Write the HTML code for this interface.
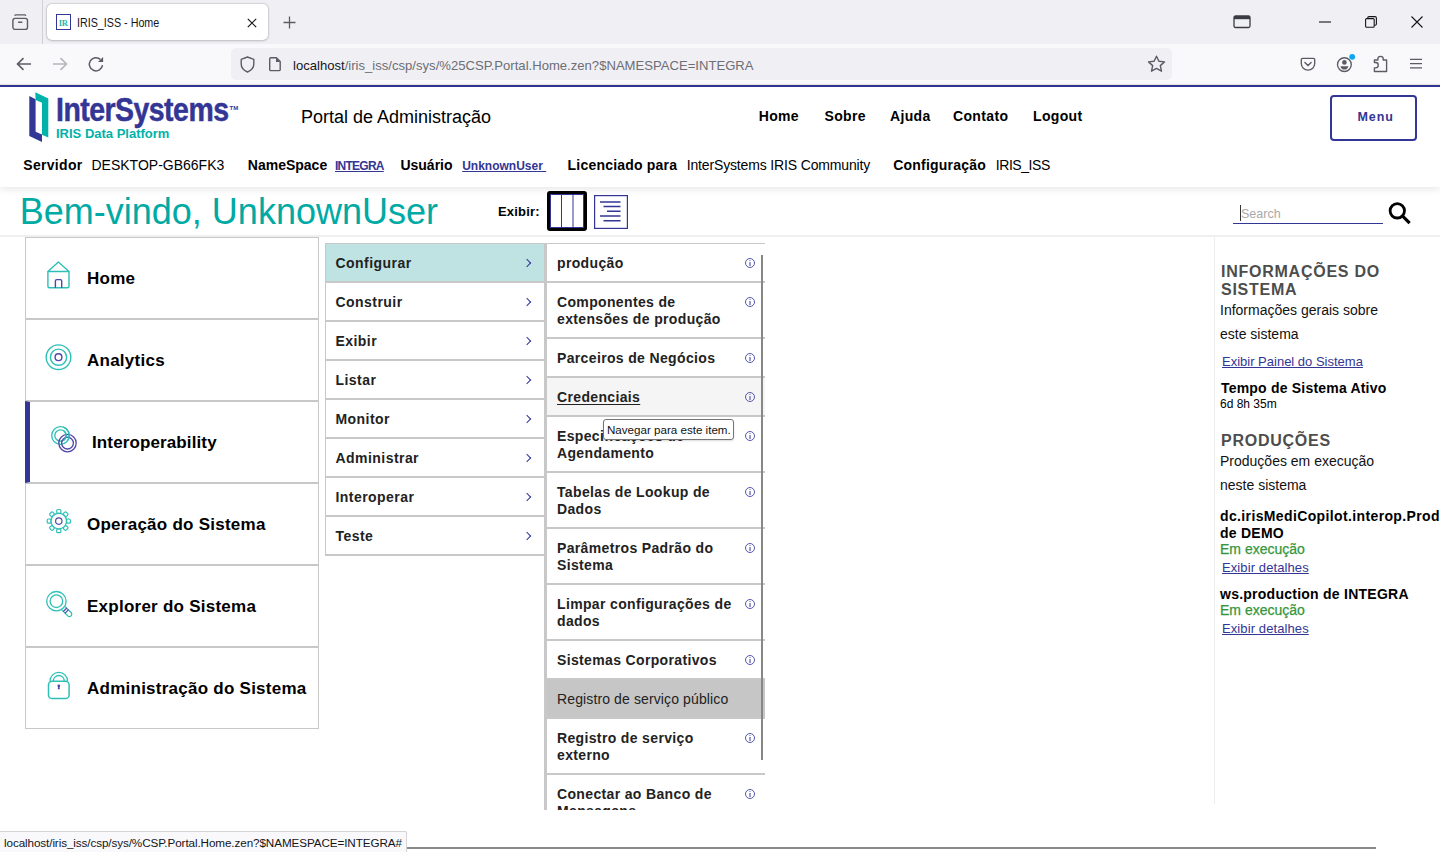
<!DOCTYPE html>
<html><head><meta charset="utf-8">
<style>
*{box-sizing:border-box;margin:0;padding:0}
html,body{width:1440px;height:852px;overflow:hidden;background:#fff;font-family:"Liberation Sans",sans-serif;color:#000}
.a{position:absolute}
.t{position:absolute;line-height:1;white-space:nowrap}
.b{font-weight:700}
svg{position:absolute;overflow:visible}
/* chrome */
#tabbar{left:0;top:0;width:1440px;height:44px;background:#f0f0f4}
#tabsep{left:42px;top:0;width:1px;height:44px;background:#cfcfd8}
#tab{left:47px;top:4px;width:221px;height:36px;background:#fff;border-radius:5px;box-shadow:0 0 2px rgba(0,0,0,.35),0 1px 3px rgba(0,0,0,.12)}
#navbar{left:0;top:44px;width:1440px;height:41px;background:#f9f9fb}
#url{left:231px;top:48px;width:941px;height:32px;background:#f0f0f4;border-radius:5px}
#blueline{left:0;top:85px;width:1440px;height:2px;background:#333695}
.ct{color:#15141a}
/* header */
#header{left:0;top:87px;width:1440px;height:100px;background:#fff;box-shadow:0 2px 8px rgba(0,0,0,.10);z-index:2}
.nav{font-size:14px;font-weight:700;letter-spacing:0.35px}
.lab{font-size:14px;font-weight:700}
.val{font-size:14px}
.lnk{font-size:12px;font-weight:700;color:#333695;text-decoration:underline}
#menubtn{left:1330px;top:95px;width:87px;height:46px;border:2px solid #333695;border-radius:4px;z-index:3}

.card{position:relative;height:82px;border:1px solid #c8c8c8;background:#fff}
.card .ct2{position:absolute;top:31.9px;font-size:17px;font-weight:700;letter-spacing:0.25px;line-height:1;white-space:nowrap}
.card.sel{border-left:5px solid #333695}
.card.sel .ct2{left:62px !important}
#menu{border:1px solid #c8c8c8;border-bottom:none;border-right:none}
.mi{position:relative;height:39px;padding:11px 0 0 9.5px;font-size:14px;font-weight:700;color:#222;line-height:17px;letter-spacing:0.45px;border-bottom:2px solid #c8c8c8;border-right:3px solid #c8c8c8}
.mi.on{background:#bfe3e3}
.chev{position:absolute;left:198px;top:16px;width:6px;height:6px;border-right:1.3px solid #333695;border-top:1.3px solid #333695;transform:rotate(45deg)}
#sub{border-top:1px solid #c8c8c8}
.si{position:relative;padding:11px 30px 9px 10px;font-size:14px;font-weight:700;color:#222;line-height:17px;letter-spacing:0.35px;border-bottom:2px solid #c8c8c8;border-left:3px solid #c8c8c8;white-space:nowrap}
.si.hov{background:#f5f5f5}
.si u{text-decoration:underline;text-underline-offset:2px}
.si.gray{background:#c6c6c6;font-weight:400;letter-spacing:0.12px;color:#222}
.inf{position:absolute;left:198px;top:14px;width:10px;height:10px;border:1.2px solid #5557aa;border-radius:50%}
.inf:after{content:"";position:absolute;left:2.85px;top:3.1px;width:1.8px;height:3.7px;background:#9a9cd0}.inf:before{content:"";position:absolute;left:2.85px;top:1.3px;width:1.8px;height:1px;background:#b4b6dc}
.rh{font-size:16px;color:#4d4d4d;letter-spacing:0.75px}
.rp{font-size:14px;color:#111}
.rl{font-size:13px;color:#333695;text-decoration:underline}
.grn{font-size:14px;color:#35963a;-webkit-text-stroke:0.25px #35963a}
</style></head><body>
<!-- ===== browser chrome ===== -->
<div id="tabbar" class="a"></div>
<div id="tabsep" class="a"></div>
<!-- tab overview icon -->
<svg style="left:12px;top:13px" width="18" height="18" viewBox="0 0 18 18">
  <path d="M3 2.3 Q3 1.9 4 1.9 H12.6 Q13.6 1.9 13.6 2.3" stroke="#5b5b66" stroke-width="1.4" fill="none" stroke-linecap="round"/>
  <rect x="0.9" y="5.4" width="14.6" height="11" rx="2.2" stroke="#5b5b66" stroke-width="1.4" fill="none"/>
  <path d="M6.6 9.2 H9.8" stroke="#5b5b66" stroke-width="1.4" stroke-linecap="round"/>
</svg>
<div id="tab" class="a"></div>
<!-- favicon -->
<div class="a" style="left:55.5px;top:14px;width:15.5px;height:15.8px;border:1.7px solid #333695;background:#fff"></div>
<div class="t b" style="left:58.8px;top:18.6px;font-family:'Liberation Serif',serif;font-size:8.6px;color:#2bb3ab;letter-spacing:-0.4px">IR</div>
<div class="t ct" style="left:77.3px;top:16.7px;font-size:12.2px;letter-spacing:0px;transform:scaleX(0.88);transform-origin:0 0">IRIS_ISS - Home</div>
<svg style="left:247px;top:18px" width="10" height="10" viewBox="0 0 10 10"><path d="M0.8 0.8 L9.2 9.2 M9.2 0.8 L0.8 9.2" stroke="#15141a" stroke-width="1.2"/></svg>
<svg style="left:283px;top:16px" width="13" height="13" viewBox="0 0 13 13"><path d="M6.5 0.5 V12.5 M0.5 6.5 H12.5" stroke="#5b5b66" stroke-width="1.3"/></svg>
<!-- window controls -->
<svg style="left:1233px;top:15px" width="18" height="14" viewBox="0 0 18 14"><rect x="1" y="1" width="16" height="11.5" rx="1.5" stroke="#3b3b44" stroke-width="1.3" fill="none"/><rect x="1" y="1" width="16" height="3.2" fill="#3b3b44"/></svg>
<svg style="left:1319px;top:21px" width="12" height="2" viewBox="0 0 12 2"><path d="M0 1 H12" stroke="#15141a" stroke-width="1.1"/></svg>
<svg style="left:1365px;top:16px" width="12" height="12" viewBox="0 0 12 12"><rect x="0.6" y="2.6" width="8.6" height="8.6" rx="1" stroke="#15141a" stroke-width="1.1" fill="none"/><path d="M2.8 2.6 V1.8 Q2.8 0.6 4 0.6 H10 Q11.4 0.6 11.4 2 V8 Q11.4 9.2 10.2 9.2 H9.2" stroke="#15141a" stroke-width="1.1" fill="none"/></svg>
<svg style="left:1411px;top:16px" width="12" height="12" viewBox="0 0 12 12"><path d="M0.5 0.5 L11.5 11.5 M11.5 0.5 L0.5 11.5" stroke="#15141a" stroke-width="1.1"/></svg>

<div id="navbar" class="a"></div>
<!-- back / forward / reload -->
<svg style="left:16px;top:57px" width="16" height="14" viewBox="0 0 16 14"><path d="M15 7 H2 M7.5 1.2 L1.5 7 L7.5 12.8" stroke="#5b5b66" stroke-width="1.6" fill="none"/></svg>
<svg style="left:52px;top:57px" width="16" height="14" viewBox="0 0 16 14"><path d="M1 7 H14 M8.5 1.2 L14.5 7 L8.5 12.8" stroke="#b5b5bb" stroke-width="1.6" fill="none"/></svg>
<svg style="left:88px;top:56px" width="17" height="17" viewBox="0 0 17 17"><path d="M14.5 9.15 A6.6 6.6 0 1 1 12.4 3.4" stroke="#5b5b66" stroke-width="1.5" fill="none"/><path d="M15.1 0.9 V6 H10 Z" fill="#5b5b66"/></svg>
<div id="url" class="a"></div>
<svg style="left:240px;top:56px" width="15" height="17" viewBox="0 0 15 17"><path d="M7.5 1 L13.8 3.3 V8 C13.8 12 11 14.6 7.5 16 C4 14.6 1.2 12 1.2 8 V3.3 Z" stroke="#5b5b66" stroke-width="1.4" fill="none" stroke-linejoin="round"/></svg>
<svg style="left:268px;top:56px" width="14" height="17" viewBox="0 0 14 17"><path d="M2.8 1.8 H8.4 L12.2 5.6 V13.4 Q12.2 14.6 11 14.6 H2.8 Q1.7 14.6 1.7 13.4 V3 Q1.7 1.8 2.8 1.8 Z" stroke="#5b5b66" stroke-width="1.4" fill="none" stroke-linejoin="round"/><path d="M8 1.8 V6 H12.2 Z" fill="#5b5b66"/></svg>
<div class="t" style="left:293px;top:58.5px;font-size:13.1px;color:#15141a">localhost<span style="color:#6d6d75">/iris_iss/csp/sys/%25CSP.Portal.Home.zen?$NAMESPACE=INTEGRA</span></div>
<svg style="left:1147px;top:55px" width="19" height="18" viewBox="0 0 19 18"><path d="M9.5 1.2 L11.9 6.3 L17.5 6.9 L13.3 10.6 L14.5 16.2 L9.5 13.4 L4.5 16.2 L5.7 10.6 L1.5 6.9 L7.1 6.3 Z" stroke="#5b5b66" stroke-width="1.4" fill="none" stroke-linejoin="round"/></svg>
<!-- right toolbar icons -->
<svg style="left:1300px;top:57px" width="16" height="15" viewBox="0 0 16 15"><path d="M2.6 1.3 H13.4 Q14.7 1.3 14.7 2.6 V6.6 A6.7 6.5 0 0 1 1.3 6.6 V2.6 Q1.3 1.3 2.6 1.3 Z" stroke="#5b5b66" stroke-width="1.35" fill="none"/><path d="M4.9 5.6 L8 8.6 L11.1 5.6" stroke="#5b5b66" stroke-width="1.4" fill="none" stroke-linecap="round"/></svg>
<svg style="left:1336px;top:55px" width="20" height="18" viewBox="0 0 20 18"><circle cx="8.4" cy="9.6" r="6.9" stroke="#5b5b66" stroke-width="1.35" fill="none"/><circle cx="8.4" cy="7.4" r="2.3" fill="#5b5b66"/><path d="M4.4 11.2 H12.4 Q11.6 14.6 8.4 14.6 Q5.2 14.6 4.4 11.2 Z" fill="#5b5b66"/><circle cx="16.2" cy="1.8" r="2.9" fill="#0ea5f0"/></svg>
<svg style="left:1372px;top:55px" width="17" height="18" viewBox="0 0 17 18"><path d="M2.4 5 H5.9 V3.6 A2.65 2.3 0 0 1 11.2 3.6 V5 H14.6 V16.5 H2.4 V12.8 H3.6 A2.65 2.65 0 0 0 3.6 7.5 H2.4 Z" stroke="#5b5b66" stroke-width="1.35" fill="none" stroke-linejoin="round"/></svg>
<svg style="left:1409px;top:57px" width="14" height="13" viewBox="0 0 14 13"><path d="M1 2.4 H13 M1 6.6 H13 M1 10.8 H13" stroke="#5b5b66" stroke-width="1.35"/></svg>
<div class="a" style="left:0;top:84px;width:1440px;height:1px;background:#e6e6e2"></div>
<div id="blueline" class="a"></div>

<!-- ===== header ===== -->
<div id="header" class="a"></div>
<div id="hdr" class="a" style="left:0;top:0;z-index:3">
<!-- logo -->
<svg style="left:24px;top:88px" width="30" height="60" viewBox="0 0 30 60">
  <polygon fill="#333695" points="5.3,8.1 11.6,11.3 11.6,43.7 18,46.5 18,53.9 5.3,47.9"/>
  <polygon fill="#00b2a9" points="11.3,4.2 24.3,10.6 24.3,49.6 18,46.8 18,14.8 11.6,12"/>
</svg>
<div class="t b" style="left:55.5px;top:92.8px;font-size:33px;color:#333695;letter-spacing:-0.6px;transform:scaleX(0.862);transform-origin:0 0;-webkit-text-stroke:0.5px #333695">InterSystems</div>
<div class="t b" style="left:229.5px;top:104.5px;font-size:6px;color:#333695">TM</div>
<div class="t b" style="left:56px;top:126.6px;font-size:13px;color:#00b2a9;letter-spacing:0px">IRIS Data Platform</div>

<div class="t" style="left:301px;top:108.4px;font-size:18px">Portal de Administração</div>
<div class="t nav" style="left:758.7px;top:108.9px">Home</div>
<div class="t nav" style="left:824.5px;top:108.9px">Sobre</div>
<div class="t nav" style="left:890px;top:108.9px">Ajuda</div>
<div class="t nav" style="left:953px;top:108.9px">Contato</div>
<div class="t nav" style="left:1033px;top:108.9px">Logout</div>

<div class="t lab" style="left:23.3px;top:158.2px;letter-spacing:0.3px">Servidor</div>
<div class="t val" style="left:91.5px;top:158.2px">DESKTOP-GB66FK3</div>
<div class="t lab" style="left:247.8px;top:158.2px">NameSpace</div>
<div class="t lnk" style="left:335px;top:159.8px;letter-spacing:-0.75px">INTEGRA</div>
<div class="t lab" style="left:400.4px;top:158.2px">Usuário</div>
<div class="t lnk" style="left:462.2px;top:159.8px">UnknownUser&nbsp;</div>
<div class="t lab" style="left:567.6px;top:158.2px;letter-spacing:0.2px">Licenciado para</div>
<div class="t val" style="left:686.7px;top:158.2px;letter-spacing:-0.15px">InterSystems IRIS Community</div>
<div class="t lab" style="left:893.3px;top:158.2px;letter-spacing:0.2px">Configuração</div>
<div class="t val" style="left:995.8px;top:158.2px;letter-spacing:-0.45px">IRIS_ISS</div>
</div>
<div id="menubtn" class="a"></div>
<div class="t b" style="left:1357.5px;top:111px;font-size:12.5px;color:#333695;letter-spacing:0.9px;z-index:4">Menu</div>


<!-- ===== welcome bar ===== -->
<div class="a" style="left:0;top:235px;width:1440px;height:2px;background:#efefef"></div>
<div class="t" style="left:19.8px;top:193.7px;font-size:36px;color:#00aaa4">Bem-vindo, UnknownUser</div>
<div class="t b" style="left:498px;top:205px;font-size:13px;letter-spacing:0.2px">Exibir:</div>
<div class="a" style="left:547px;top:191px;width:40px;height:40px;border:3px solid #000;border-radius:3px"></div>
<svg style="left:550px;top:194px" width="34" height="34" viewBox="0 0 34 34"><rect x="0.5" y="0.5" width="33" height="33" fill="#fff" stroke="#333695" stroke-width="1"/><path d="M11.5 0.5 V33.5 M23 0.5 V33.5" stroke="#333695" stroke-width="1"/></svg>
<svg style="left:594px;top:195px" width="34" height="34" viewBox="0 0 34 34"><rect x="0.6" y="0.6" width="32.8" height="32.8" fill="#fff" stroke="#333695" stroke-width="1.2"/><path d="M6 7 H26.5 M9.5 11.5 H26.5 M13 16.3 H26.5 M6 21 H26.5 M9.5 25.8 H26.5" stroke="#333695" stroke-width="1.4"/></svg>
<div class="t" style="left:1241px;top:207.5px;font-size:12.5px;color:#a9a9a9">Search</div>
<div class="a" style="left:1240px;top:205px;width:1px;height:16px;background:#333"></div>
<div class="a" style="left:1233px;top:223px;width:150px;height:1px;background:#333695"></div>
<svg style="left:1387px;top:201px" width="25" height="24" viewBox="0 0 25 24"><circle cx="10.3" cy="9.8" r="7.2" stroke="#000" stroke-width="2.8" fill="none"/><path d="M15.6 15.1 L21.5 21" stroke="#000" stroke-width="3.2" stroke-linecap="square"/></svg>

<!-- ===== left cards ===== -->
<div class="a" id="cards" style="left:25px;top:237px;width:294px">
  <div class="card"><div class="ct2" style="left:61px">Home</div></div>
  <div class="card"><div class="ct2" style="left:61px">Analytics</div></div>
  <div class="card sel"><div class="ct2" style="left:61px;letter-spacing:0.12px">Interoperability</div></div>
  <div class="card"><div class="ct2" style="left:61px">Operação do Sistema</div></div>
  <div class="card"><div class="ct2" style="left:61px">Explorer do Sistema</div></div>
  <div class="card"><div class="ct2" style="left:61px">Administração do Sistema</div></div>
</div>


<svg style="left:0;top:0;z-index:5" width="100" height="852" viewBox="0 0 100 852"><defs><clipPath id="cpI"><polygon points="63,425 80,425 80,441 63.5,441"/></clipPath></defs>
 <g fill="none" stroke-width="1.4" stroke-linejoin="round">
  <!-- home -->
  <path d="M47.9 271.5 L58.4 262.1 L69 271.5 Z" stroke="#2ebfb6"/>
  <path d="M47.9 271.5 V286.2 Q47.9 287.7 49.4 287.7 H67.5 Q69 287.7 69 286.2 V271.5" stroke="#2ebfb6"/>
  <path d="M55.4 287.7 V281 Q55.4 279.6 56.8 279.6 H60.3 Q61.7 279.6 61.7 281 V287.7" stroke="#4f48a8"/>
  <!-- analytics -->
  <circle cx="58.5" cy="357.2" r="12.3" stroke="#2ebfb6"/>
  <circle cx="58.5" cy="357.2" r="8.1" stroke="#2ebfb6"/>
  <circle cx="58.5" cy="357.2" r="3.4" stroke="#4f48a8"/>
  <!-- interop -->
  <circle cx="60.5" cy="435.5" r="8.8" stroke="#2ebfb6" stroke-width="1.3"/>
  <circle cx="60.5" cy="435.5" r="5.7" stroke="#2ebfb6" stroke-width="1.3"/>
  <circle cx="67.5" cy="443.1" r="8.7" stroke="#4f48a8" stroke-width="1.3"/>
  <circle cx="67.5" cy="443.1" r="5.9" stroke="#4f48a8" stroke-width="1.3"/>
  <g clip-path="url(#cpI)">
  <circle cx="60.5" cy="435.5" r="8.8" stroke="#2ebfb6" stroke-width="1.3"/>
  <circle cx="60.5" cy="435.5" r="5.7" stroke="#2ebfb6" stroke-width="1.3"/>
  </g>
  <!-- gear -->
  <g stroke="#2ebfb6" stroke-width="1.2" fill="#fff"><rect x="-2.1" y="-11.6" width="4.2" height="3.8" rx="1.3" transform="translate(58.8 521.1) rotate(0)"/><rect x="-2.1" y="-11.6" width="4.2" height="3.8" rx="1.3" transform="translate(58.8 521.1) rotate(45)"/><rect x="-2.1" y="-11.6" width="4.2" height="3.8" rx="1.3" transform="translate(58.8 521.1) rotate(90)"/><rect x="-2.1" y="-11.6" width="4.2" height="3.8" rx="1.3" transform="translate(58.8 521.1) rotate(135)"/><rect x="-2.1" y="-11.6" width="4.2" height="3.8" rx="1.3" transform="translate(58.8 521.1) rotate(180)"/><rect x="-2.1" y="-11.6" width="4.2" height="3.8" rx="1.3" transform="translate(58.8 521.1) rotate(225)"/><rect x="-2.1" y="-11.6" width="4.2" height="3.8" rx="1.3" transform="translate(58.8 521.1) rotate(270)"/><rect x="-2.1" y="-11.6" width="4.2" height="3.8" rx="1.3" transform="translate(58.8 521.1) rotate(315)"/></g>
  <circle cx="58.8" cy="521.1" r="7.8" stroke="#2ebfb6" stroke-width="1.3" fill="#fff"/>
  <circle cx="58.8" cy="521.1" r="3.2" stroke="#4f48a8" stroke-width="1.2"/>
  <!-- magnifier -->
  <circle cx="56.4" cy="601.2" r="9.7" stroke="#2ebfb6" stroke-width="1.3"/>
  <circle cx="56.4" cy="601.2" r="6.3" stroke="#2ebfb6" stroke-width="1.3"/>
  <g transform="translate(56.4 601.2) rotate(-45)">
    <path d="M-2.3 9.6 V18.4 A2.3 2.3 0 0 0 2.3 18.4 V9.6" stroke="#2ebfb6" stroke-width="1.3"/>
    <path d="M-2.6 12.2 H2.6 M-2.6 14.6 H2.6" stroke="#4f48a8" stroke-width="1.2"/>
  </g>
  <!-- lock -->
  <path d="M50.1 681 A8.7 8.7 0 0 1 67.5 681" stroke="#2ebfb6" stroke-width="1.3"/>
  <path d="M53.3 681 A5.5 5.5 0 0 1 64.3 681" stroke="#2ebfb6" stroke-width="1.3"/>
  <rect x="48.5" y="681.2" width="20.6" height="17.4" rx="3.6" stroke="#2ebfb6" stroke-width="1.5"/>
 </g>
 <circle cx="58.8" cy="685.8" r="1.4" fill="#4f48a8"/>
 <path d="M58.1 686 H59.5 L59.8 689.3 H57.8 Z" fill="#4f48a8"/>
</svg>

<!-- ===== middle menu ===== -->
<div class="a" id="menu" style="left:325px;top:243px;width:222px">
  <div class="mi on">Configurar<span class="chev"></span></div>
  <div class="mi">Construir<span class="chev"></span></div>
  <div class="mi">Exibir<span class="chev"></span></div>
  <div class="mi">Listar<span class="chev"></span></div>
  <div class="mi">Monitor<span class="chev"></span></div>
  <div class="mi">Administrar<span class="chev"></span></div>
  <div class="mi">Interoperar<span class="chev"></span></div>
  <div class="mi">Teste<span class="chev"></span></div>
</div>

<!-- ===== submenu ===== -->
<div class="a" id="sub" style="left:544px;top:243px;width:221px;height:567px;overflow:hidden">
  <div class="si">produção<i class="inf"></i></div>
  <div class="si">Componentes de<br>extensões de produção<i class="inf"></i></div>
  <div class="si">Parceiros de Negócios<i class="inf"></i></div>
  <div class="si hov"><u>Credenciais</u><i class="inf"></i></div>
  <div class="si">Especificações de<br>Agendamento<i class="inf"></i></div>
  <div class="si">Tabelas de Lookup de<br>Dados<i class="inf"></i></div>
  <div class="si">Parâmetros Padrão do<br>Sistema<i class="inf"></i></div>
  <div class="si">Limpar configurações de<br>dados<i class="inf"></i></div>
  <div class="si">Sistemas Corporativos<i class="inf"></i></div>
  <div class="si gray">Registro de serviço público</div>
  <div class="si">Registro de serviço<br>externo<i class="inf"></i></div>
  <div class="si">Conectar ao Banco de<br>Mensagens<i class="inf"></i></div>
</div>
<div class="a" style="left:761px;top:255px;width:2px;height:505px;background:#878787"></div>
<!-- tooltip -->
<div class="a" style="left:603px;top:419px;width:131px;height:21px;background:#fff;border:1px solid #767676;border-radius:3px;box-shadow:0 1px 2px rgba(0,0,0,.15)"></div>
<div class="t" style="left:607px;top:423.8px;font-size:11.6px;color:#111;letter-spacing:0px">Navegar para este item.</div>

<!-- ===== right panel ===== -->
<div class="a" style="left:1214px;top:237px;width:1px;height:567px;background:#eeeeee"></div>
<div class="a" style="left:1220px;top:0">
  <div class="t b rh" style="left:1px;top:264.3px">INFORMAÇÕES DO</div>
  <div class="t b rh" style="left:1px;top:282px">SISTEMA</div>
  <div class="t rp" style="left:0;top:303px">Informações gerais sobre</div>
  <div class="t rp" style="left:0;top:326.9px">este sistema</div>
  <div class="t rl" style="left:2px;top:355px">Exibir Painel do Sistema</div>
  <div class="t b" style="left:1px;top:381.1px;font-size:14px;letter-spacing:0.2px">Tempo de Sistema Ativo</div>
  <div class="t" style="left:0;top:397.7px;font-size:12px">6d 8h 35m</div>
  <div class="t b rh" style="left:1px;top:433.2px">PRODUÇÕES</div>
  <div class="t rp" style="left:0;top:453.8px">Produções em execução</div>
  <div class="t rp" style="left:0;top:477.8px">neste sistema</div>
  <div class="t b" style="left:0;top:508.8px;font-size:14px;letter-spacing:0.37px">dc.irisMediCopilot.interop.Production</div>
  <div class="t b" style="left:0;top:526px;font-size:14px;letter-spacing:0.25px">de DEMO</div>
  <div class="t grn" style="left:0;top:542px">Em execução</div>
  <div class="t rl" style="left:2px;top:561.3px;letter-spacing:0.1px">Exibir detalhes</div>
  <div class="t b" style="left:0;top:586.5px;font-size:14px;letter-spacing:0.25px">ws.production de INTEGRA</div>
  <div class="t grn" style="left:0;top:602.6px">Em execução</div>
  <div class="t rl" style="left:2px;top:622.1px;letter-spacing:0.1px">Exibir detalhes</div>
</div>

<!-- ===== bottom ===== -->
<div class="a" style="left:406px;top:847px;width:970px;height:2px;background:#8a8a8a"></div>
<div class="a" style="left:0;top:831px;width:407px;height:21px;background:#f9f9fb;border:1px solid #d4d4d8;border-left:none;border-bottom:none;border-top-right-radius:2px"></div>
<div class="t" style="left:4px;top:836.7px;font-size:11.7px;color:#15141a;letter-spacing:-0.1px">localhost/iris_iss/csp/sys/%CSP.Portal.Home.zen?$NAMESPACE=INTEGRA#</div>

</body></html>
